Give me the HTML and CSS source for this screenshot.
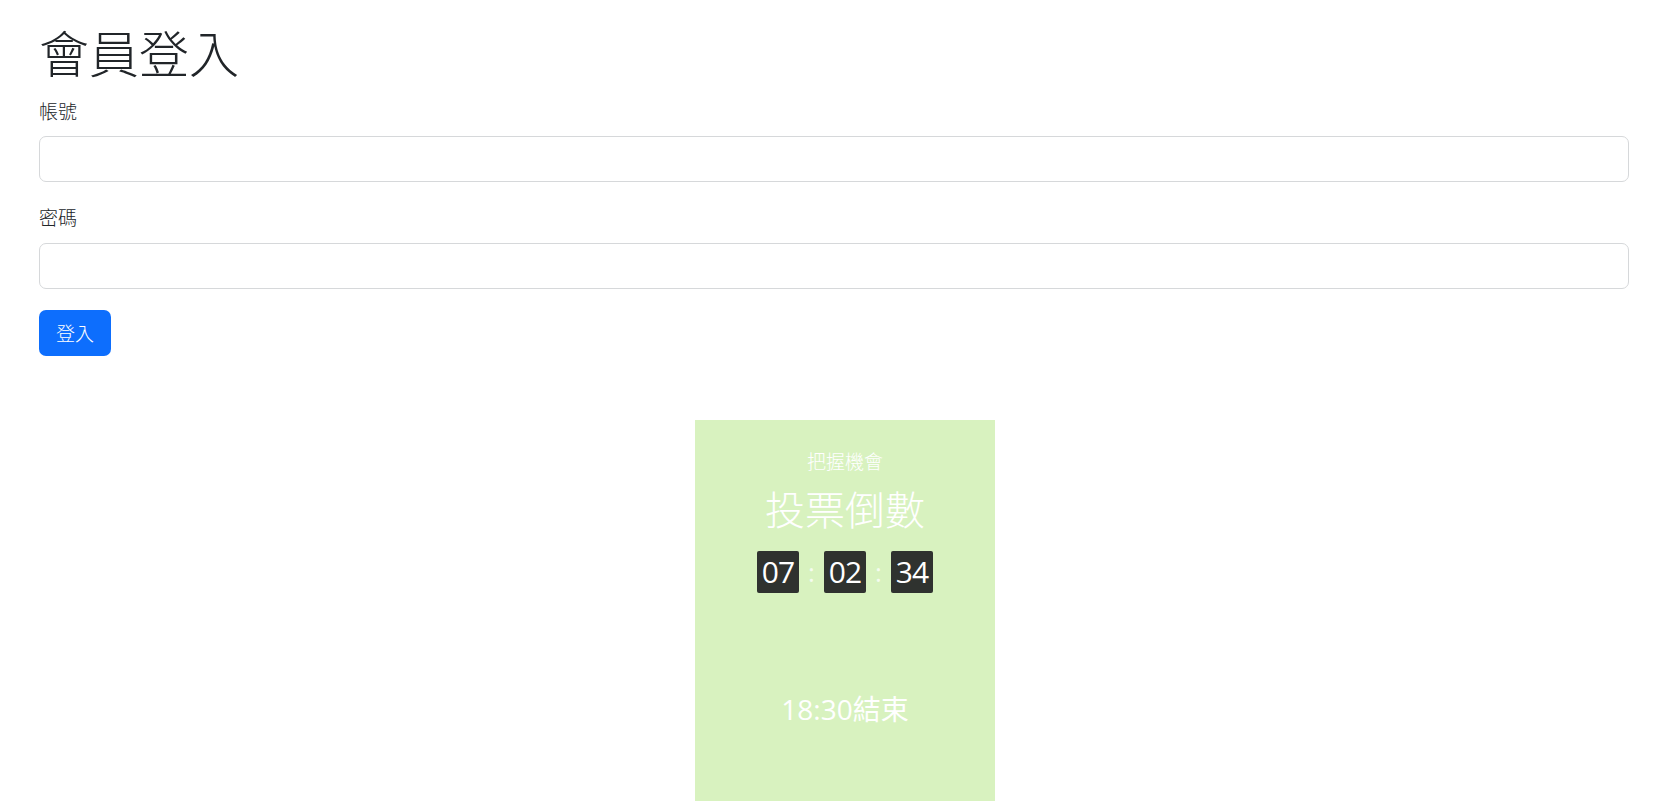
FILE: index.html
```html
<!DOCTYPE html>
<html lang="zh-Hant">
<head>
<meta charset="utf-8">
<title>會員登入</title>
<link rel="stylesheet" href="styles.css">
</head>
<body>
<main class="page">
  <h1 class="title">會員登入</h1>
  <form class="login">
    <div class="field">
      <label class="label" for="acc">帳號</label>
      <input class="input" id="acc" type="text">
    </div>
    <div class="field">
      <label class="label" for="pwd">密碼</label>
      <input class="input" id="pwd" type="password">
    </div>
    <button class="btn" type="button">登入</button>
  </form>
  <section class="promo-wrap">
    <div class="promo">
      <p class="promo-sub">把握機會</p>
      <p class="promo-title">投票倒數</p>
      <div class="clock">
        <span class="digit">07</span>
        <span class="colon">:</span>
        <span class="digit">02</span>
        <span class="colon">:</span>
        <span class="digit">34</span>
      </div>
      <p class="promo-end">18:30結束</p>
    </div>
  </section>
</main>
</body>
</html>
```

FILE: styles.css
```css
* { box-sizing: border-box; }
html, body { margin: 0; padding: 0; background: #fff; }
body {
  font-family: "Open Sans", "Noto Sans CJK TC", sans-serif;
  color: #212529;
  font-size: 19px;
  line-height: 1.5;
}
.page {
  padding: 0 48px 0 39px;
}
.title {
  margin: 21px 0 15px;
  font-size: 50px;
  line-height: 60px;
  font-weight: 300;
  font-family: "Noto Sans CJK TC", sans-serif;
  color: #212529;
}
.login { display: flex; flex-direction: column; align-items: flex-start; }
.field { width: 100%; margin-bottom: 20px; }
.label {
  display: block;
  font-family: "Noto Sans CJK TC", sans-serif;
  font-weight: 300;
  font-size: 19px;
  line-height: 29px;
  margin-bottom: 12px;
}
.field:first-child .label { margin-bottom: 11px; }
.input {
  display: block;
  width: 100%;
  height: 46px;
  border: 1px solid #d6d8da;
  border-radius: 7px;
  background: #fff;
  padding: 0 14px;
  font-size: 19px;
  outline: none;
}
.btn {
  margin-top: 1px;
  height: 46px;
  padding: 0 17px;
  border: none;
  border-radius: 7px;
  background: #0d6efd;
  color: #fff;
  font-family: "Noto Sans CJK TC", sans-serif;
  font-weight: 300;
  font-size: 19px;
  line-height: 46px;
}
.promo-wrap {
  display: flex;
  justify-content: center;
  padding-left: 22px;
  margin-top: 64px;
}
.promo {
  width: 300px;
  height: 381px;
  background: #d8f2bf;
  color: #fff;
  display: flex;
  flex-direction: column;
  align-items: center;
  padding-top: 26px;
}
.promo p { margin: 0; }
.promo-sub {
  font-family: "Noto Sans CJK TC", sans-serif;
  font-weight: 300;
  font-size: 19px;
  line-height: 29px;
}
.promo-title {
  margin-top: 9px !important;
  font-family: "Noto Sans CJK TC", sans-serif;
  font-weight: 300;
  font-size: 40px;
  line-height: 48px;
}
.clock {
  margin-top: 19px;
  display: flex;
  align-items: center;
  height: 42px;
}
.digit {
  width: 42px;
  height: 42px;
  background: #2f322f;
  border-radius: 2px;
  color: #fff;
  font-family: "Open Sans", sans-serif;
  font-size: 30px;
  line-height: 42px;
  text-align: center;
  letter-spacing: -1px;
}
.colon {
  width: 25px;
  text-align: center;
  color: rgba(255,255,255,0.75);
  font-size: 26px;
  line-height: 42px;
}
.promo-end {
  margin-top: 99px !important;
  font-family: "Open Sans", "Noto Sans CJK TC", sans-serif;
  font-size: 28px;
  line-height: 35px;
}
```
